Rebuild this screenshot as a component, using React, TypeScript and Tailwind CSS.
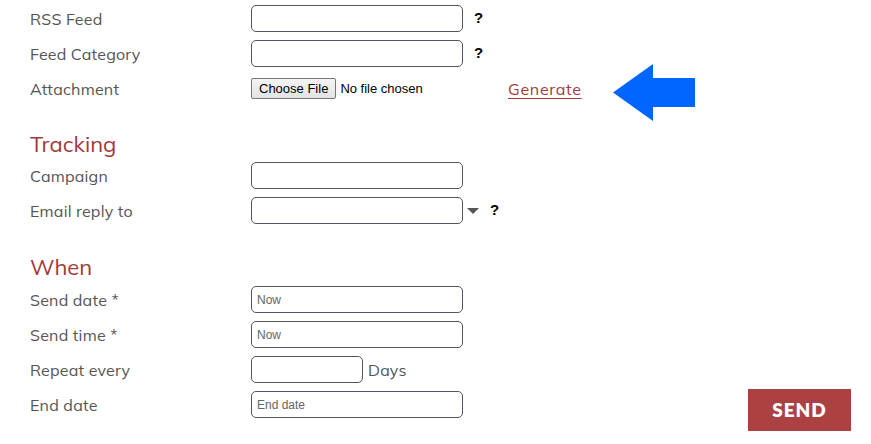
import React from "react"

const label = "w-[221px] shrink-0 text-[16px] tracking-[0.2px] text-[#555] font-['Mulish','Noto_Sans',sans-serif]"
const inputCls =
  "w-[212px] h-[27px] rounded-[5px] border border-[#50565e] bg-white px-[5px] text-[12px] text-[#333] placeholder:text-[#666] font-['Liberation_Sans',Arial,sans-serif] outline-none"

function Help() {
  return <span className="ml-[11px] text-[15px] font-bold text-black font-['Liberation_Sans',Arial,sans-serif]">?</span>
}

function Row({ name, children }: { name: string; children?: React.ReactNode }) {
  return (
    <div className="flex h-[35px] items-center">
      <div className={label}>{name}</div>
      {children}
    </div>
  )
}

function Heading({ text, className }: { text: string; className: string }) {
  return (
    <h2 className={`h-[28px] leading-[28px] text-[22px] text-[#a3393a] font-['Mulish','Noto_Sans',sans-serif] ${className}`}>
      {text}
    </h2>
  )
}

export default function App() {
  return (
    <div className="flex w-[871px] h-[444px] bg-white pl-[30px] pr-[20px] pt-[1px]">
      <div className="flex-1 pb-[9px]">
        <Row name="RSS Feed">
          <input className={inputCls} />
          <Help />
        </Row>
        <Row name="Feed Category">
          <input className={inputCls} />
          <Help />
        </Row>
        <Row name="Attachment">
          <div className="flex w-[257px] items-center font-['Liberation_Sans',Arial,sans-serif] text-[13px] text-black">
            <button className="h-[21px] rounded-[2px] border border-[#767676] bg-gradient-to-b from-[#f4f4f4] to-[#e3e3e3] px-[7px]">
              Choose File
            </button>
            <span className="ml-[4px]">No file chosen</span>
          </div>
          <a href="#" className="text-[16px] tracking-[0.7px] text-[#a3393a] underline underline-offset-[3px] font-['Mulish','Noto_Sans',sans-serif]">
            Generate
          </a>
          <svg width="82" height="58" viewBox="0 0 82 58" className="ml-[31px] mt-[8px] shrink-0">
            <path d="M0 28.5 L40 0 L40 14 L82 14 L82 43 L40 43 L40 57 Z" fill="#0066ff" />
          </svg>
        </Row>

        <Heading text="Tracking" className="mt-[24px]" />
        <Row name="Campaign">
          <input className={inputCls} />
        </Row>
        <Row name="Email reply to">
          <input className={inputCls} />
          <svg width="12" height="6" viewBox="0 0 12 6" className="ml-[4px]">
            <path d="M0 0 H12 L6 6 Z" fill="#555" />
          </svg>
          <Help />
        </Row>

        <Heading text="When" className="mt-[25px] mb-[1px]" />
        <Row name="Send date *">
          <input className={inputCls} placeholder="Now" />
        </Row>
        <Row name="Send time *">
          <input className={inputCls} placeholder="Now" />
        </Row>
        <Row name="Repeat every">
          <input className={`${inputCls} !w-[112px]`} />
          <span className="ml-[5px] text-[16px] tracking-[0.2px] text-[#555] font-['Mulish','Noto_Sans',sans-serif]">Days</span>
        </Row>
        <Row name="End date">
          <input className={inputCls} placeholder="End date" />
        </Row>
      </div>
      <button className="self-end mb-[13px] w-[103px] h-[42px] bg-[#ab4241] text-white text-[19px] font-extrabold tracking-[1px] font-['Lato',sans-serif]">
        SEND
      </button>
    </div>
  )
}
